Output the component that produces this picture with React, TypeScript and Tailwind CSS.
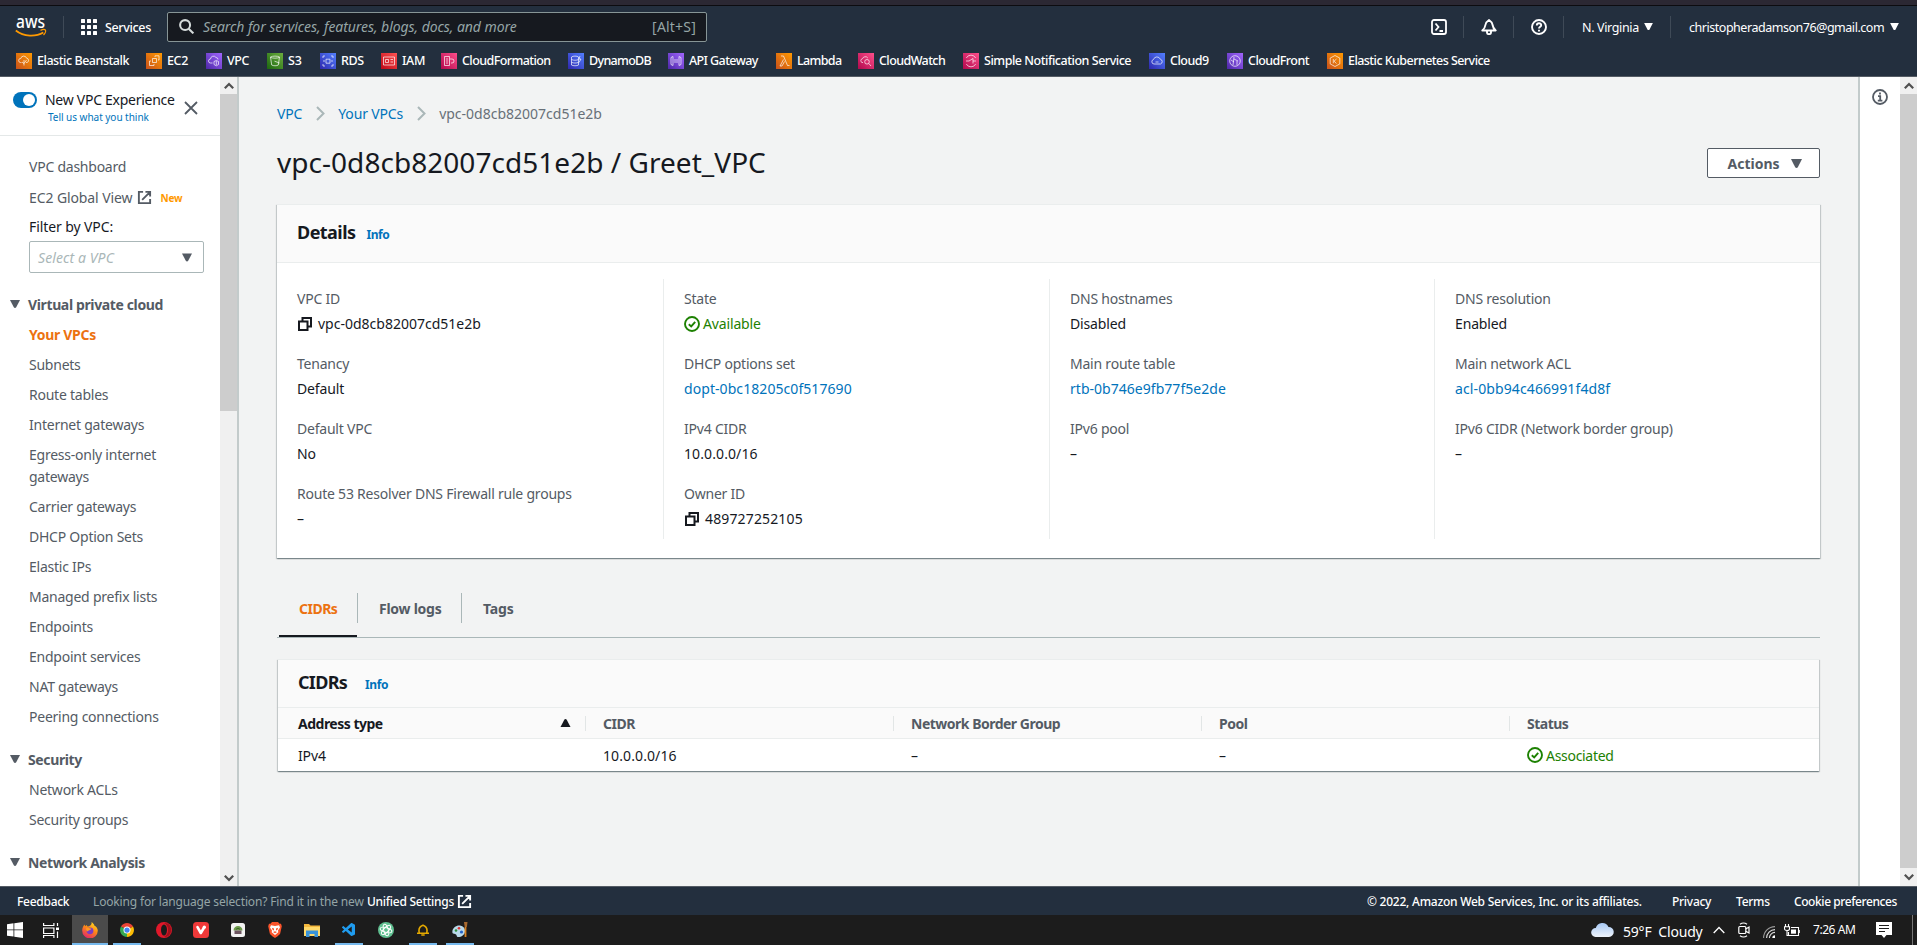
import React from "react";
import { VscVscode } from "react-icons/vsc";

type Kids = { children?: React.ReactNode };

const Tri = ({ className = "" }: { className?: string }) => (
  <svg viewBox="0 0 10 8" className={`shrink-0 ${className}`} fill="currentColor">
    <path d="M0 0h10L6.2 7.3a1.4 1.4 0 0 1-2.4 0z" />
  </svg>
);

const External = ({ className = "" }: { className?: string }) => (
  <svg viewBox="0 0 16 16" className={`shrink-0 ${className}`} fill="none" stroke="currentColor" strokeWidth="2">
    <path d="M6.500 2H2v12h12V9.500M9 2h5v5M13.500 2.500 5.500 10.500" />
  </svg>
);

const Copy = () => (
  <svg viewBox="0 0 14 14" className="ml-px mr-[6px] h-[14px] w-[14px] shrink-0" fill="none" stroke="#16191f" strokeWidth="2">
    <path d="M1 4.500h8.500V13H1zM4.500 4.500V1H13v8.500H9.500" />
  </svg>
);

const Ok = () => (
  <svg viewBox="0 0 16 16" className="mr-[3px] h-4 w-4 shrink-0" fill="none" stroke="#1d8102" strokeWidth="1.9">
    <circle cx="8" cy="8" r="7" />
    <path d="M4.8 8.2 7.2 10.4 11.2 5.8" />
  </svg>
);

const Chevron = ({ up = false }: { up?: boolean }) => (
  <svg viewBox="0 0 10 8" className="h-2 w-[10px]" fill="none" stroke="#505050" strokeWidth="2.2">
    <path d={up ? "M.8 6.3 5 2l4.200 4.300" : "M.8 1.700 5 6l4.200-4.300"} />
  </svg>
);

const services = [
  { label: "Elastic Beanstalk", w: "w-[130px]", from: "#c8511b", to: "#ff9900", t: "tracking-[-0.46px]", d: "M5.500 9.500h-1a2 2 0 0 1 .3-4 3 3 0 0 1 5.800-.3 2.200 2.200 0 0 1 .4 4.300h-1M8 12.500V7M6 9l2 1.500L10.500 7" },
  { label: "EC2", w: "w-[60px]", from: "#c8511b", to: "#ff9900", t: "tracking-[-0.35px]", d: "M6.500 5.500h4v4h-4zM5 8H3.500v4.500H8V11M9 4V2.800h4V7h-1" },
  { label: "VPC", w: "w-[61px]", from: "#4d27a8", to: "#a166ff", t: "tracking-[-0.35px]", d: "M6.500 10h-2a2 2 0 0 1 0-4 3 3 0 0 1 5.500-1.500 2 2 0 0 1 2 2M8 8.500l2.300-1 2.200 1v3l-2.200 1.300L8 11.500zM10.300 8v4" },
  { label: "S3", w: "w-[53px]", from: "#1b660f", to: "#6cae3e", t: "tracking-[-0.2px]", d: "M3.500 4c2-1.200 7-1.200 9 0l-1.200 8c-1.500 1-5 1-6.600 0zM3.500 4.300c2 1.200 7 1.200 9 0M7.500 8.200l5 1.800" },
  { label: "RDS", w: "w-[61px]", from: "#2e27ad", to: "#527fff", t: "tracking-[-0.45px]", d: "M6 6.200h4v4H6zM3 5V3h2M11 3h2v2M3 11v2h2M13 11v2h-2M4 7v2M12 7v2" },
  { label: "IAM", w: "w-[60px]", from: "#bd0816", to: "#ff5252", t: "tracking-[-0.35px]", d: "M2.500 4h11v8h-11zM4.500 6.500h3v3h-3zM9.500 6.500h2.500M9.500 9h2.500" },
  { label: "CloudFormation", w: "w-[127px]", from: "#b0084d", to: "#ff4f8b", t: "tracking-[-0.58px]", d: "M3.500 3.500h5v9h-5zM5 6h2M5 8h2M5 10h2M10 10h1a2 2 0 0 0 0-4h-2" },
  { label: "DynamoDB", w: "w-[100px]", from: "#2e27ad", to: "#527fff", t: "tracking-[-0.68px]", d: "M3.500 4c1.500-1.200 5.500-1.200 7 0v8c-1.500 1-5.500 1-7 0zM3.500 6.500c2 1 5 1 7 0M3.500 9.300c2 1 5 1 7 0M12 3l-1 3h2l-2 3.500" },
  { label: "API Gateway", w: "w-[108px]", from: "#4d27a8", to: "#a166ff", t: "tracking-[-0.6px]", d: "M5 3.500 3 4.500v7l2 1zM11 3.500l2 1v7l-2 1zM7 6v4M9 6v4" },
  { label: "Lambda", w: "w-[82px]", from: "#c8511b", to: "#ff9900", t: "tracking-[-0.65px]", d: "M5 3h2.500l4 9.500h2M7.500 6.500 4 13h2l2.500-4.500" },
  { label: "CloudWatch", w: "w-[105px]", from: "#b0084d", to: "#ff4f8b", t: "tracking-[-0.58px]", d: "M5 9.500H4a2 2 0 0 1 .5-3.800 3 3 0 0 1 5.300-.7M9 6.500a2.300 2.300 0 1 1 0 4.600 2.300 2.300 0 0 1 0-4.600zM10.800 10.500l2.200 2.500" },
  { label: "Simple Notification Service", w: "w-[186px]", from: "#b0084d", to: "#ff4f8b", t: "tracking-[-0.47px]", d: "M3.300 5a5.300 5.300 0 0 1 9.400 0M3.300 11a5.300 5.300 0 0 0 9.400 0M3 8h3l4-2.500v5M10 8h3" },
  { label: "Cloud9", w: "w-[78px]", from: "#2e27ad", to: "#527fff", t: "tracking-[-0.5px]", d: "M5 11a2.300 2.300 0 0 1-.5-4.500 3.600 3.600 0 0 1 6.800-.3 2.500 2.500 0 0 1 .2 4.800zM6.500 9h3" },
  { label: "CloudFront", w: "w-[100px]", from: "#4d27a8", to: "#a166ff", t: "tracking-[-0.55px]", d: "M8 2.700a5.300 5.300 0 1 1 0 10.600A5.300 5.300 0 0 1 8 2.700zM6 12l1-8M7 6l4 2M10 12V8M4 7l3 2" },
  { label: "Elastic Kubernetes Service", w: "w-[180px]", from: "#c8511b", to: "#ff9900", t: "tracking-[-0.55px]", d: "M8 2.500l4.800 2.600v5.800L8 13.500l-4.800-2.600V5.100zM6.300 6v4.300M9.500 6 7 8.200l2.500 2.300" },
];

const Sep = () => <div className="h-[22px] w-px shrink-0 bg-[#3f4a57]" />;

function TopBar() {
  return (
    <header className="h-[77px] border-b border-[#545b64] bg-[#232f3e] text-white">
      <div className="h-[5px] bg-[#2b2833]" />
      <div className="h-px bg-[#0c0c10]" />
      <div className="flex h-[41px] items-center">
        <svg viewBox="0 0 32 32" className="ml-[15px] h-8 w-8 shrink-0 overflow-visible">
          <text x="1" y="16.500" fill="#fff" fontFamily="Noto Sans, sans-serif" fontWeight="500" fontSize="18" textLength="29" lengthAdjust="spacingAndGlyphs">aws</text>
          <path d="M.8 19.500c8 6.500 20 6.500 27.500 2" fill="none" stroke="#ff9900" strokeWidth="1.700" />
          <path d="M25.500 19.300c2-.8 4.500-.9 5 0s-.6 3.300-2 4.600" fill="none" stroke="#ff9900" strokeWidth="1.300" />
        </svg>
        <div className="ml-4 flex"><Sep /></div>
        <svg viewBox="0 0 16 16" className="ml-[17px] h-4 w-4 shrink-0" fill="#fff">
          {[0, 6, 12].map((y) => [0, 6, 12].map((x) => <rect key={`${x}-${y}`} x={x} y={y} width="4" height="4" rx=".6" />))}
        </svg>
        <span className="ml-2 w-[62px] pt-[2px] text-[12.5px] font-medium leading-4 tracking-[-0.35px]">Services</span>
        <div className="flex h-[30px] w-[540px] items-center rounded-[2px] border border-[#879596] bg-[#16191f] pl-[11px] pr-[10px]">
          <svg viewBox="0 0 16 16" className="h-[15px] w-[15px] shrink-0" fill="none" stroke="#d5dbdb" strokeWidth="2.200">
            <circle cx="6.500" cy="6.500" r="5.300" />
            <path d="m10.300 10.300 5 5" />
          </svg>
          <span className="ml-[9px] text-[14px] italic tracking-[-0.06px] text-[#95a5a6]">Search for services, features, blogs, docs, and more</span>
          <span className="ml-auto text-[14px] tracking-[0.2px] text-[#95a5a6]">[Alt+S]</span>
        </div>
        <div className="ml-[724px] flex items-center">
          <svg viewBox="0 0 16 16" className="h-4 w-4" fill="none" stroke="#fff" strokeWidth="1.800">
            <rect x="1" y="1" width="14" height="14" rx="2" />
            <path d="M4.500 4.500 7.500 8l-3 3.500M8.500 12H12" />
          </svg>
          <div className="ml-4"><Sep /></div>
          <svg viewBox="0 0 16 16" className="ml-[17px] h-4 w-4" fill="none" stroke="#fff" strokeWidth="1.900" strokeLinejoin="round">
            <path d="M1.300 11.500C3.800 9.500 4.100 8.300 4.400 6 4.700 3.800 6 2.300 8 1c2 1.300 3.300 2.800 3.600 5 .3 2.300.6 3.500 3.100 5.500zM6 12v1.500c0 2.200 4 2.200 4 0V12" />
          </svg>
          <div className="ml-4"><Sep /></div>
          <svg viewBox="0 0 16 16" className="ml-[17px] h-4 w-4" fill="none" stroke="#fff" strokeWidth="1.900">
            <circle cx="8" cy="8" r="7" />
            <path d="M5.800 6.500C5.800 3.400 10.300 3.600 10.200 6.300 10.200 7.800 8 7.900 8 9.600M8 10.800v1.800" />
          </svg>
          <div className="ml-4"><Sep /></div>
          <span className="ml-[18px] w-[62px] whitespace-nowrap pt-[2px] text-[12.5px] leading-4 tracking-[-0.35px]">N. Virginia</span>
          <Tri className="h-[7px] w-[9px]" />
          <div className="ml-[17px]"><Sep /></div>
          <span className="ml-[18px] w-[201px] whitespace-nowrap pt-[2px] text-[12.5px] leading-4 tracking-[-0.47px]">christopheradamson76@gmail.com</span>
          <Tri className="h-[7px] w-[9px]" />
        </div>
      </div>
      <div className="flex h-[29px] items-start pl-4 pt-[6px] text-[12.5px] font-medium leading-4">
        {services.map((s, i) => (
          <div key={s.label} className={`flex h-4 shrink-0 items-center whitespace-nowrap ${s.w} ${s.t}`}>
            <svg viewBox="0 0 16 16" className="mr-[5px] h-4 w-4 shrink-0" fill="none">
              <defs>
                <linearGradient id={`g${i}`} x1="0" y1="1" x2="1" y2="0">
                  <stop stopColor={s.from} />
                  <stop offset="1" stopColor={s.to} />
                </linearGradient>
              </defs>
              <rect width="16" height="16" fill={`url(#g${i})`} />
              <path d={s.d} stroke="#fff" strokeOpacity=".85" strokeWidth=".8" />
            </svg>
            {s.label}
          </div>
        ))}
      </div>
    </header>
  );
}

const NavItem = ({ children, active = false, tall = false }: Kids & { active?: boolean; tall?: boolean }) => (
  <div className={`flex items-center pl-[29px] ${tall ? "h-[52px]" : "h-[30px]"} ${active ? "font-bold tracking-[-0.3px] text-[#ec7211]" : "tracking-[-0.24px]"}`}>
    <span className="w-[160px] leading-[22px]">{children}</span>
  </div>
);

const NavHead = ({ children }: Kids) => (
  <div className="mb-[1px] flex h-[30px] items-center pl-[10px] font-bold tracking-[-0.37px]">
    <Tri className="mr-2 h-[8px] w-[10px]" />
    {children}
  </div>
);

function Sidebar() {
  return (
    <div className="flex w-[239px] shrink-0 border-r-2 border-[#c3cbcb] bg-white">
      <nav className="w-[220px] overflow-hidden text-[14px] tracking-[-0.1px] text-[#545b64]">
        <div className="flex h-[59px] border-b border-[#e4e8e8] pl-[13px]">
          <div className="mt-[15px] flex h-4 w-6 shrink-0 justify-end rounded-full bg-[#0073bb] p-[2px]">
            <div className="h-3 w-3 rounded-full bg-white" />
          </div>
          <div className="ml-2 w-[139px] pt-[13px]">
            <div className="whitespace-nowrap leading-5 tracking-[-0.27px] text-[#16191f]">New VPC Experience</div>
            <div className="pl-[3px] text-[10px] leading-[15px] tracking-[-0.03px] text-[#0073bb]">Tell us what you think</div>
          </div>
          <svg viewBox="0 0 14 14" className="mt-6 h-[14px] w-[14px]" fill="none" stroke="#545b64" strokeWidth="1.800">
            <path d="M1 1l12 12M13 1 1 13" />
          </svg>
        </div>
        <div className="h-4" />
        <NavItem>VPC dashboard</NavItem>
        <div className="flex h-[30px] items-center pl-[29px]">
          EC2 Global View
          <External className="ml-[5px] h-[15px] w-[15px]" />
          <span className="ml-[8px] pt-[3px] text-[10px] font-bold text-[#ff9900]">New</span>
        </div>
        <div className="flex h-7 items-center pl-[29px] text-[#16191f]">Filter by VPC:</div>
        <div className="ml-[29px] mt-px flex h-8 w-[175px] items-center justify-between rounded-[2px] border border-[#aab7b8] pl-2 pr-[11px]">
          <span className="italic tracking-[0.1px] text-[#aab7b8]">Select a VPC</span>
          <Tri className="h-[9px] w-[10px]" />
        </div>
        <div className="h-4" />
        <NavHead>Virtual private cloud</NavHead>
        <NavItem active>Your VPCs</NavItem>
        <NavItem>Subnets</NavItem>
        <NavItem>Route tables</NavItem>
        <NavItem>Internet gateways</NavItem>
        <NavItem tall>Egress-only internet gateways</NavItem>
        <NavItem>Carrier gateways</NavItem>
        <NavItem>DHCP Option Sets</NavItem>
        <NavItem>Elastic IPs</NavItem>
        <NavItem>Managed prefix lists</NavItem>
        <NavItem>Endpoints</NavItem>
        <NavItem>Endpoint services</NavItem>
        <NavItem>NAT gateways</NavItem>
        <NavItem>Peering connections</NavItem>
        <div className="h-3" />
        <NavHead>Security</NavHead>
        <NavItem>Network ACLs</NavItem>
        <NavItem>Security groups</NavItem>
        <div className="h-3" />
        <NavHead>Network Analysis</NavHead>
      </nav>
      <div className="flex w-[17px] flex-col bg-[#f0f0f0]">
        <div className="flex h-[17px] items-center justify-center"><Chevron up /></div>
        <div className="h-[317px] bg-[#cdcdcd]" />
        <div className="mt-auto flex h-[17px] items-center justify-center"><Chevron /></div>
      </div>
    </div>
  );
}

type Field = { label: string; value: string; kind?: "copy" | "ok" | "link"; t?: string };

const columns: { w: string; fields: Field[] }[] = [
  { w: "w-[386px]", fields: [
    { label: "VPC ID", value: "vpc-0d8cb82007cd51e2b", kind: "copy", t: "tracking-normal" },
    { label: "Tenancy", value: "Default" },
    { label: "Default VPC", value: "No" },
    { label: "Route 53 Resolver DNS Firewall rule groups", value: "–" },
  ] },
  { w: "w-[386px]", fields: [
    { label: "State", value: "Available", kind: "ok" },
    { label: "DHCP options set", value: "dopt-0bc18205c0f517690", kind: "link", t: "tracking-[0.07px]" },
    { label: "IPv4 CIDR", value: "10.0.0.0/16", t: "tracking-[0.1px]" },
    { label: "Owner ID", value: "489727252105", kind: "copy", t: "tracking-[0.14px]" },
  ] },
  { w: "w-[385px]", fields: [
    { label: "DNS hostnames", value: "Disabled" },
    { label: "Main route table", value: "rtb-0b746e9fb77f5e2de", kind: "link", t: "tracking-[0.03px]" },
    { label: "IPv6 pool", value: "–" },
  ] },
  { w: "w-[380px]", fields: [
    { label: "DNS resolution", value: "Enabled" },
    { label: "Main network ACL", value: "acl-0bb94c466991f4d8f", kind: "link", t: "tracking-[0.11px]" },
    { label: "IPv6 CIDR (Network border group)", value: "–" },
  ] },
];

const valueColor = { copy: "text-[#16191f]", ok: "text-[#1d8102]", link: "text-[#0073bb]", plain: "text-[#16191f]" };

const cardShadow = "shadow-[0_1px_1px_0_rgba(0,28,36,0.3),1px_1px_1px_0_rgba(0,28,36,0.15),-1px_1px_1px_0_rgba(0,28,36,0.15)]";

const Crumb = () => (
  <svg viewBox="0 0 9 15" className="h-[15px] w-[9px]" fill="none" stroke="#aab7b8" strokeWidth="2">
    <path d="m1 1 6.500 6.500L1 14" />
  </svg>
);

function Details() {
  return (
    <section className={`mt-[26px] h-[354px] w-[1543px] border-t border-[#eaeded] bg-white ${cardShadow}`}>
      <div className="flex h-[58px] items-center border-b border-[#eaeded] bg-[#fafafa] pb-[3px] pl-5">
        <h2 className="text-[18px] font-bold leading-none tracking-[-0.55px]">Details</h2>
        <span className="ml-[11px] pt-[6px] text-[12px] font-bold tracking-[-0.4px] text-[#0073bb]">Info</span>
      </div>
      <div className="flex h-[276px] pt-4">
        {columns.map((c, i) => (
          <div key={i} className={`h-[260px] pl-5 ${c.w} ${i ? "border-l border-[#eaeded]" : ""} pt-[9px]`}>
            {c.fields.map((f) => (
              <div key={f.label} className="h-[65px]">
                <div className="leading-[22px] tracking-[-0.22px] text-[#545b64]">{f.label}</div>
                <div className={`mt-[3px] flex items-center leading-[22px] ${valueColor[f.kind ?? "plain"]} ${f.t ?? ""}`}>
                  {f.kind === "copy" && <Copy />}
                  {f.kind === "ok" && <Ok />}
                  {f.value}
                </div>
              </div>
            ))}
          </div>
        ))}
      </div>
    </section>
  );
}

function CidrTable() {
  const cols = [
    { h: "Address type", v: "IPv4", w: "w-[309px] pl-5" },
    { h: "CIDR", v: "10.0.0.0/16", w: "w-[308px] pl-4" },
    { h: "Network Border Group", v: "–", w: "w-[308px] pl-4" },
    { h: "Pool", v: "–", w: "w-[308px] pl-4" },
    { h: "Status", v: "Associated", w: "w-[308px] pl-4" },
  ];
  return (
    <section className={`ml-px mt-[21px] h-[112px] w-[1541px] border-t border-[#eaeded] bg-white ${cardShadow}`}>
      <div className="flex h-12 items-center border-b border-[#eaeded] bg-[#fafafa] pb-[4px] pl-5">
        <h2 className="text-[18px] font-bold leading-none tracking-[-0.7px]">CIDRs</h2>
        <span className="ml-[18px] pt-[6px] text-[12px] font-bold tracking-[-0.4px] text-[#0073bb]">Info</span>
      </div>
      <div className="flex h-[31px] items-center border-b border-[#eaeded] bg-[#fafafa] font-bold text-[#545b64]">
        {cols.map((c, i) => (
          <div key={c.h} className={`flex ${c.w} items-center ${i ? "" : "text-[#16191f]"}`}>
            <span className="tracking-[-0.5px]">{c.h}</span>
            {i === 0 && <Tri className="ml-auto mr-[14px] h-2 w-[11px] rotate-180" />}
            {i < 4 && <div className={`h-[15px] w-px bg-[#e2e6e6] ${i ? "ml-auto" : ""} mr-[1px]`} />}
          </div>
        ))}
      </div>
      <div className="flex h-8 items-center text-[#16191f]">
        {cols.map((c, i) => (
          <div key={c.h} className={`flex ${c.w} items-center ${i === 4 ? "tracking-[-0.3px] text-[#1d8102]" : ""} ${i === 1 ? "tracking-[0.1px]" : ""}`}>
            {i === 4 && <Ok />}
            {c.v}
          </div>
        ))}
      </div>
    </section>
  );
}

function Main() {
  return (
    <main className="w-[1619px] shrink-0 bg-[#f2f3f3] pl-[38px] text-[14px] tracking-[-0.15px] text-[#16191f]">
      <div className="flex h-[72px] items-center text-[#0073bb]">
        <span className="mr-[14px]">VPC</span>
        <Crumb />
        <span className="ml-[13px] mr-[14px]">Your VPCs</span>
        <Crumb />
        <span className="ml-[13px] tracking-normal text-[#687078]">vpc-0d8cb82007cd51e2b</span>
      </div>
      <div className="flex h-[29px] w-[1543px] items-center justify-between">
        <h1 className="pb-[3px] text-[28px] leading-none tracking-[0.04px]">vpc-0d8cb82007cd51e2b / Greet_VPC</h1>
        <button className="-mt-px flex h-[30px] w-[113px] shrink-0 items-center justify-center gap-[11px] rounded-[2px] border border-[#545b64] bg-white pl-[2px] text-[14px] font-bold tracking-normal text-[#545b64]">
          Actions
          <Tri className="h-[9px] w-[11px]" />
        </button>
      </div>
      <Details />
      <div className="mt-[29px] h-[51px] w-[1543px] border-b border-[#aab7b8] pl-[2px]">
        <div className="flex h-[50px] pt-[6px] font-bold text-[#545b64]">
          <div className="flex h-[44px] w-[79px] flex-col justify-between text-[#ec7211]">
            <div className="flex h-[30px] items-center border-r border-[#aab7b8] pl-5 tracking-[-0.5px]">CIDRs</div>
            <div className="h-[2px] w-[78px] bg-[#16191f]" />
          </div>
          <div className="flex h-[30px] w-[104px] items-center border-r border-[#aab7b8] pl-[21px] tracking-[-0.25px]">Flow logs</div>
          <div className="flex h-[30px] items-center pl-[21px]">Tags</div>
        </div>
      </div>
      <CidrTable />
    </main>
  );
}

function RightRail() {
  return (
    <>
      <div className="flex w-[42px] shrink-0 justify-center border-l-2 border-[#c3cbcb] bg-white pt-3">
        <svg viewBox="0 0 16 16" className="h-4 w-4" fill="none" stroke="#545b64" strokeWidth="1.800">
          <circle cx="8" cy="8" r="7" />
          <path d="M8 3.500v2M6 7.200h2.200v4M5.800 11.600h4.600" />
        </svg>
      </div>
      <div className="flex w-[17px] shrink-0 flex-col bg-[#f0f0f0]">
        <div className="flex h-[17px] items-center justify-center"><Chevron up /></div>
        <div className="h-[774px] bg-[#cdcdcd]" />
        <div className="flex h-[18px] items-center justify-center"><Chevron /></div>
      </div>
    </>
  );
}

function Footer() {
  return (
    <footer className="flex h-[29px] items-center border-t border-[#545b64] bg-[#232f3e] pl-[17px] pt-px text-[12px] font-medium tracking-[-0.27px] text-white">
      <span className="w-[76px]">Feedback</span>
      <span className="w-[274px] whitespace-nowrap font-normal tracking-[-0.16px] text-[#95a5a6]">Looking for language selection? Find it in the new</span>
      <span className="w-[90px] whitespace-nowrap">Unified Settings</span>
      <External className="h-[15px] w-[15px]" />
      <span className="ml-auto w-[305px] whitespace-nowrap tracking-[-0.24px]">© 2022, Amazon Web Services, Inc. or its affiliates.</span>
      <span className="w-[64px]">Privacy</span>
      <span className="w-[58px]">Terms</span>
      <span className="w-[123px] whitespace-nowrap tracking-[-0.42px]">Cookie preferences</span>
    </footer>
  );
}

const apps: { name: string; line: string; icon: React.ReactNode }[] = [
  { name: "firefox", line: "w-9", icon: (
    <svg viewBox="0 0 16 16" className="h-4 w-4">
      <defs><linearGradient id="ff" x1=".8" y1="0" x2=".3" y2="1"><stop stopColor="#ffe226" /><stop offset=".45" stopColor="#ff8a16" /><stop offset="1" stopColor="#e3256b" /></linearGradient></defs>
      <path d="M9.500 0c2 1.300 2.600 2.500 3 3.800 2 .5 3.300 3 3.300 5A7.800 7.800 0 0 1 .2 8.500C.2 6 1.200 4 2.500 2.500l.6 1.700L4.500 3l1 1.400c1.200-.2 2-.4 2.800-1C9.500 2.500 9.800 1.300 9.500 0z" fill="url(#ff)" />
      <circle cx="8" cy="8.800" r="3.400" fill="#7b3cc4" />
      <path d="M4 6.500c2-1.300 4 .2 5.500.2-1 2-3.500 1-3.700 2.800C4.500 9 4 8 4 6.500z" fill="#ff9a1f" />
    </svg>) },
  { name: "chrome", line: "w-7", icon: (
    <svg viewBox="0 0 16 16" className="h-[14px] w-[14px]">
      <path d="M8 8 1.100 4A8 8 0 0 1 14.900 4z" fill="#ea4335" />
      <path d="M8 8V16A8 8 0 0 1 1.100 4z" fill="#34a853" />
      <path d="M8 8l6.900-4A8 8 0 0 1 8 16z" fill="#fbbc05" />
      <circle cx="8" cy="8" r="4" fill="#fff" /><circle cx="8" cy="8" r="3" fill="#4285f4" />
    </svg>) },
  { name: "opera", line: "w-0", icon: (
    <svg viewBox="0 0 16 16" className="h-4 w-4"><circle cx="8" cy="8" r="8" fill="#e0182a" /><path d="M8 1a8 8 0 0 1 0 14 8 8 0 0 0 5-1.500A8 8 0 0 0 12 1.500z" fill="#9e111b" /><ellipse cx="8" cy="8" rx="3" ry="5.600" fill="#1b1b1b" /></svg>) },
  { name: "vivaldi", line: "w-0", icon: (
    <svg viewBox="0 0 16 16" className="h-4 w-4"><rect width="16" height="16" rx="3.500" fill="#ef3939" /><path d="M4.500 5.200 7.800 11 10.500 6.500" fill="none" stroke="#fff" strokeWidth="2.600" strokeLinecap="round" strokeLinejoin="round" /><circle cx="11.300" cy="5.200" r="1.700" fill="#fff" /></svg>) },
  { name: "garden", line: "w-0", icon: (
    <svg viewBox="0 0 14 14" className="h-[14px] w-[14px]"><rect width="14" height="14" rx="2.500" fill="#f2f2f2" /><path d="M2.500 7.500C2.500 1.500 11.500 1.500 11.500 7.500z" fill="#6c9a4a" /><path d="M3.500 7.500h7v3.500h-7z" fill="#6d5560" /><path d="M5 6.500c1-1.500 3-1.500 4 0" stroke="#42672d" fill="none" /></svg>) },
  { name: "brave", line: "w-0", icon: (
    <svg viewBox="0 0 14 16" className="h-4 w-[14px]"><path d="M4 0h6l1.500 1.700 1.500 0 .8 2.600-1.600 7.200c-.2 1-3.500 3.500-5.200 4.500-1.700-1-5-3.500-5.200-4.500L.2 4.300 1 1.700h1.500z" fill="#fb542b" /><path d="M3 3.300 7 4l4-.7 1 2.200-2 3 .3 1.800L7 13l-3.300-2.700L4 8.500l-2-3z" fill="#fff" /><path d="M3.800 5.700 6 6.500v2L4.700 8zM10.200 5.700 8 6.500v2L9.300 8zM5 10l2-.8L9 10l-2 1.200z" fill="#fb542b" /></svg>) },
  { name: "files", line: "w-0", icon: (
    <svg viewBox="0 0 16 14" className="h-[14px] w-4"><path d="M0 1h5l1.500 1.500H16V13H0z" fill="#f5b83d" /><path d="M0 4h16v9H0z" fill="#ffd96b" /><path d="M2 14V7.500h12V14h-3.500v-3h-5v3z" fill="#3a93d8" /></svg>) },
  { name: "code", line: "w-7", icon: <VscVscode className="h-4 w-4 text-[#1f9cf0]" /> },
  { name: "atom", line: "w-0", icon: (
    <svg viewBox="0 0 16 16" className="h-4 w-4"><circle cx="8" cy="8" r="8" fill="#5fbf90" /><g fill="none" stroke="#fff" strokeWidth="1"><ellipse cx="8" cy="8" rx="6" ry="2.300" transform="rotate(15 8 8)" /><ellipse cx="8" cy="8" rx="6" ry="2.300" transform="rotate(75 8 8)" /><ellipse cx="8" cy="8" rx="6" ry="2.300" transform="rotate(135 8 8)" /></g></svg>) },
  { name: "bell", line: "w-7", icon: (
    <svg viewBox="0 0 12 12" className="h-3 w-3" fill="none" stroke="#e3a800" strokeWidth="1.600"><path d="M2.300 9C1.300 5 3 2.200 6 1.200 9 2.200 10.700 5 9.700 9M0 9.200h12M4.300 11h3.400" /></svg>) },
  { name: "paint", line: "w-7", icon: (
    <svg viewBox="0 0 16 16" className="h-4 w-4"><path d="M.5 11C-.5 6.500 4 3 8 3.500c4 .5 5.500 3.500 5 6.500-.5 3-4 5.500-7.500 5-1-.2-.5-1.800-1.500-2.500S.8 12 .5 11z" fill="#b9d9ea" /><circle cx="4" cy="8.500" r="1.300" fill="#2f8f3c" /><circle cx="7" cy="6.200" r="1.300" fill="#d33" /><circle cx="9.500" cy="10" r="1.600" fill="#2563c9" /><path d="M13.500 5v10" stroke="#d9801f" strokeWidth="1.800" /><path d="M12 0h3.500l-.6 5h-2.200z" fill="#a8692f" /></svg>) },
];

function Taskbar() {
  return (
    <div className="flex h-[30px] items-center bg-[#1c1c1c] text-white">
      <svg viewBox="0 0 16 16" className="ml-[7px] h-4 w-4" fill="#fff"><path d="M0 2.200 6.500 1.300v6.200H0zM7.300 1.200 16 0v7.500H7.300zM0 8.300h6.500v6.300L0 13.700zM7.300 8.300H16V16l-8.700-1.200z" /></svg>
      <svg viewBox="0 0 17 15" className="ml-5 mr-3 h-[15px] w-[17px]" fill="none" stroke="#fff" strokeWidth="1.200"><path d="M.6 0v2.500h10.300V0M.6 5h10.300v5.500H.6zM.6 15v-2.500h10.300V15M14.500 0v3M14.500 8.500V15" /><path d="M13 4.500h3v2.500h-3z" fill="#fff" stroke="none" /></svg>
      {apps.map((a, i) => (
        <div key={a.name} className={`flex h-[30px] flex-col items-center ${i === 0 ? "w-9 bg-[#4b4b4b]" : "w-[37px]"}`}>
          <div className="flex h-7 items-center pt-[2px]">{a.icon}</div>
          <div className={`h-[2px] bg-[#76b9ed] ${a.line}`} />
        </div>
      ))}
      <div className="ml-auto flex h-[30px] items-center">
        <svg viewBox="0 0 23 15" className="mb-[2px] h-[15px] w-[23px]">
          <defs><linearGradient id="cl" x1="0" y1="0" x2="0" y2="1"><stop stopColor="#a8c9f5" /><stop offset="1" stopColor="#eef3fa" /></linearGradient></defs>
          <path d="M4.500 15a4.500 4.500 0 0 1 .3-9A6.800 6.800 0 0 1 17.500 5 5 5 0 0 1 18 15z" fill="url(#cl)" />
        </svg>
        <span className="ml-[9px] w-[90px] whitespace-pre pt-[2px] text-[14px] tracking-[-0.2px]">{"59°F  Cloudy"}</span>
        <svg viewBox="0 0 12 8" className="h-2 w-3" fill="none" stroke="#fff" strokeWidth="1.300"><path d="M.7 7 6 1.500 11.300 7" /></svg>
        <svg viewBox="0 0 12 16" className="ml-[13px] h-4 w-3" fill="none" stroke="#fff" strokeWidth="1.200"><rect x=".8" y="4.500" width="7" height="7" rx="1" /><path d="M7.800 7 11 5v6L7.800 9.200M2 2.300Q5.500-.3 9 2.300M2 13.700q3.500 2.600 7 0" /></svg>
        <svg viewBox="0 0 12 12" className="ml-[13px] mt-[3px] h-3 w-3" fill="none" strokeWidth="1.100"><path d="M.6 12A11.400 11.400 0 0 1 12 .6" stroke="#999" /><path d="M3.600 12A8.400 8.400 0 0 1 12 3.600M6.400 12A5.600 5.600 0 0 1 12 6.400" stroke="#ddd" /><path d="M9.300 12A2.700 2.700 0 0 1 12 9.300V12z" fill="#fff" /></svg>
        <svg viewBox="0 0 17 13" className="ml-[9px] h-[13px] w-[17px]" fill="none" stroke="#fff" strokeWidth="1.100"><path d="M7 3.500h7.500v8h-10V8M15.300 6v3M1.500 0v2.500M4.500 0v2.500M.5 2.700h5v2C5.500 7 .5 7 .5 4.700zM3 6.500v5h2" /><path d="M7 5.500h5v4.200H7z" fill="#fff" stroke="none" /></svg>
        <span className="ml-3 w-[63px] whitespace-nowrap text-[12px] tracking-[-0.45px]">7:26 AM</span>
        <svg viewBox="0 0 16 16" className="mr-[20px] h-4 w-4"><path d="M0 0h16v13h-5.500L8 16l-2.500-3H0z" fill="#fff" /><path d="M3 3.500h10M3 6.500h10M3 9.500h6" stroke="#1c1c1c" strokeWidth="1.100" /></svg>
        <div className="mr-1 h-[30px] w-px bg-[#777]" />
      </div>
    </div>
  );
}

export default function App() {
  return (
    <div className="h-[951px] w-[1925px] overflow-hidden bg-white font-['Noto_Sans','Open_Sans',sans-serif]">
      <div className="w-[1917px]">
        <TopBar />
        <div className="flex h-[809px]">
          <Sidebar />
          <Main />
          <RightRail />
        </div>
        <Footer />
        <Taskbar />
      </div>
    </div>
  );
}
